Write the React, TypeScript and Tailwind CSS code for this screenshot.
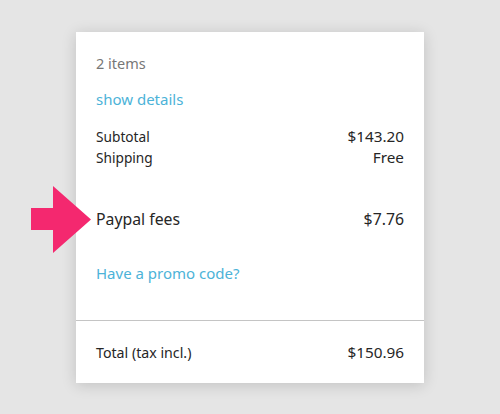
export default function App() {
  return (
    <div
      className="w-[500px] h-[414px] bg-[#e5e5e5] pt-[32px] overflow-hidden"
      style={{ fontFamily: '"Noto Sans", "Open Sans", sans-serif' }}
    >
      <div className="relative mx-auto w-[348px] bg-white shadow-[0_2px_14px_rgba(0,0,0,0.16)] text-[#262626]">
        <div className="px-5 pt-[21px] pb-[36px]">
          <div className="text-[14.5px] leading-[20px] text-[#777777]">2 items</div>
          <div className="mt-[16px] text-[15px] leading-[20px] text-[#4cb3d8]">show details</div>
          <div className="mt-[17px] flex flex-col leading-[21px]">
            <div className="flex justify-between items-baseline">
              <span className="text-[13.7px]">Subtotal</span>
              <span className="text-[15.3px]">$143.20</span>
            </div>
            <div className="flex justify-between items-baseline">
              <span className="text-[13.7px]">Shipping</span>
              <span className="text-[15.3px]">Free</span>
            </div>
          </div>
          <div className="mt-[40px] flex justify-between items-baseline text-[15.8px] leading-[22px]">
            <span>Paypal fees</span>
            <span>$7.76</span>
          </div>
          <div className="mt-[32px] text-[15px] leading-[22px] text-[#4cb3d8]">Have a promo code?</div>
        </div>
        <div className="border-t border-[#c4c4c4] px-5 pt-[21px] pb-[20px] flex justify-between items-baseline leading-[20px]">
          <span className="text-[14.2px]">Total (tax incl.)</span>
          <span className="text-[15.3px]">$150.96</span>
        </div>
        <svg
          className="absolute left-[-45px] top-[154px]"
          width="60"
          height="67"
          viewBox="0 0 60 67"
        >
          <polygon points="0,22 22,22 22,0 60,33.5 22,67 22,44 0,44" fill="#f4286f" />
        </svg>
      </div>
    </div>
  );
}
